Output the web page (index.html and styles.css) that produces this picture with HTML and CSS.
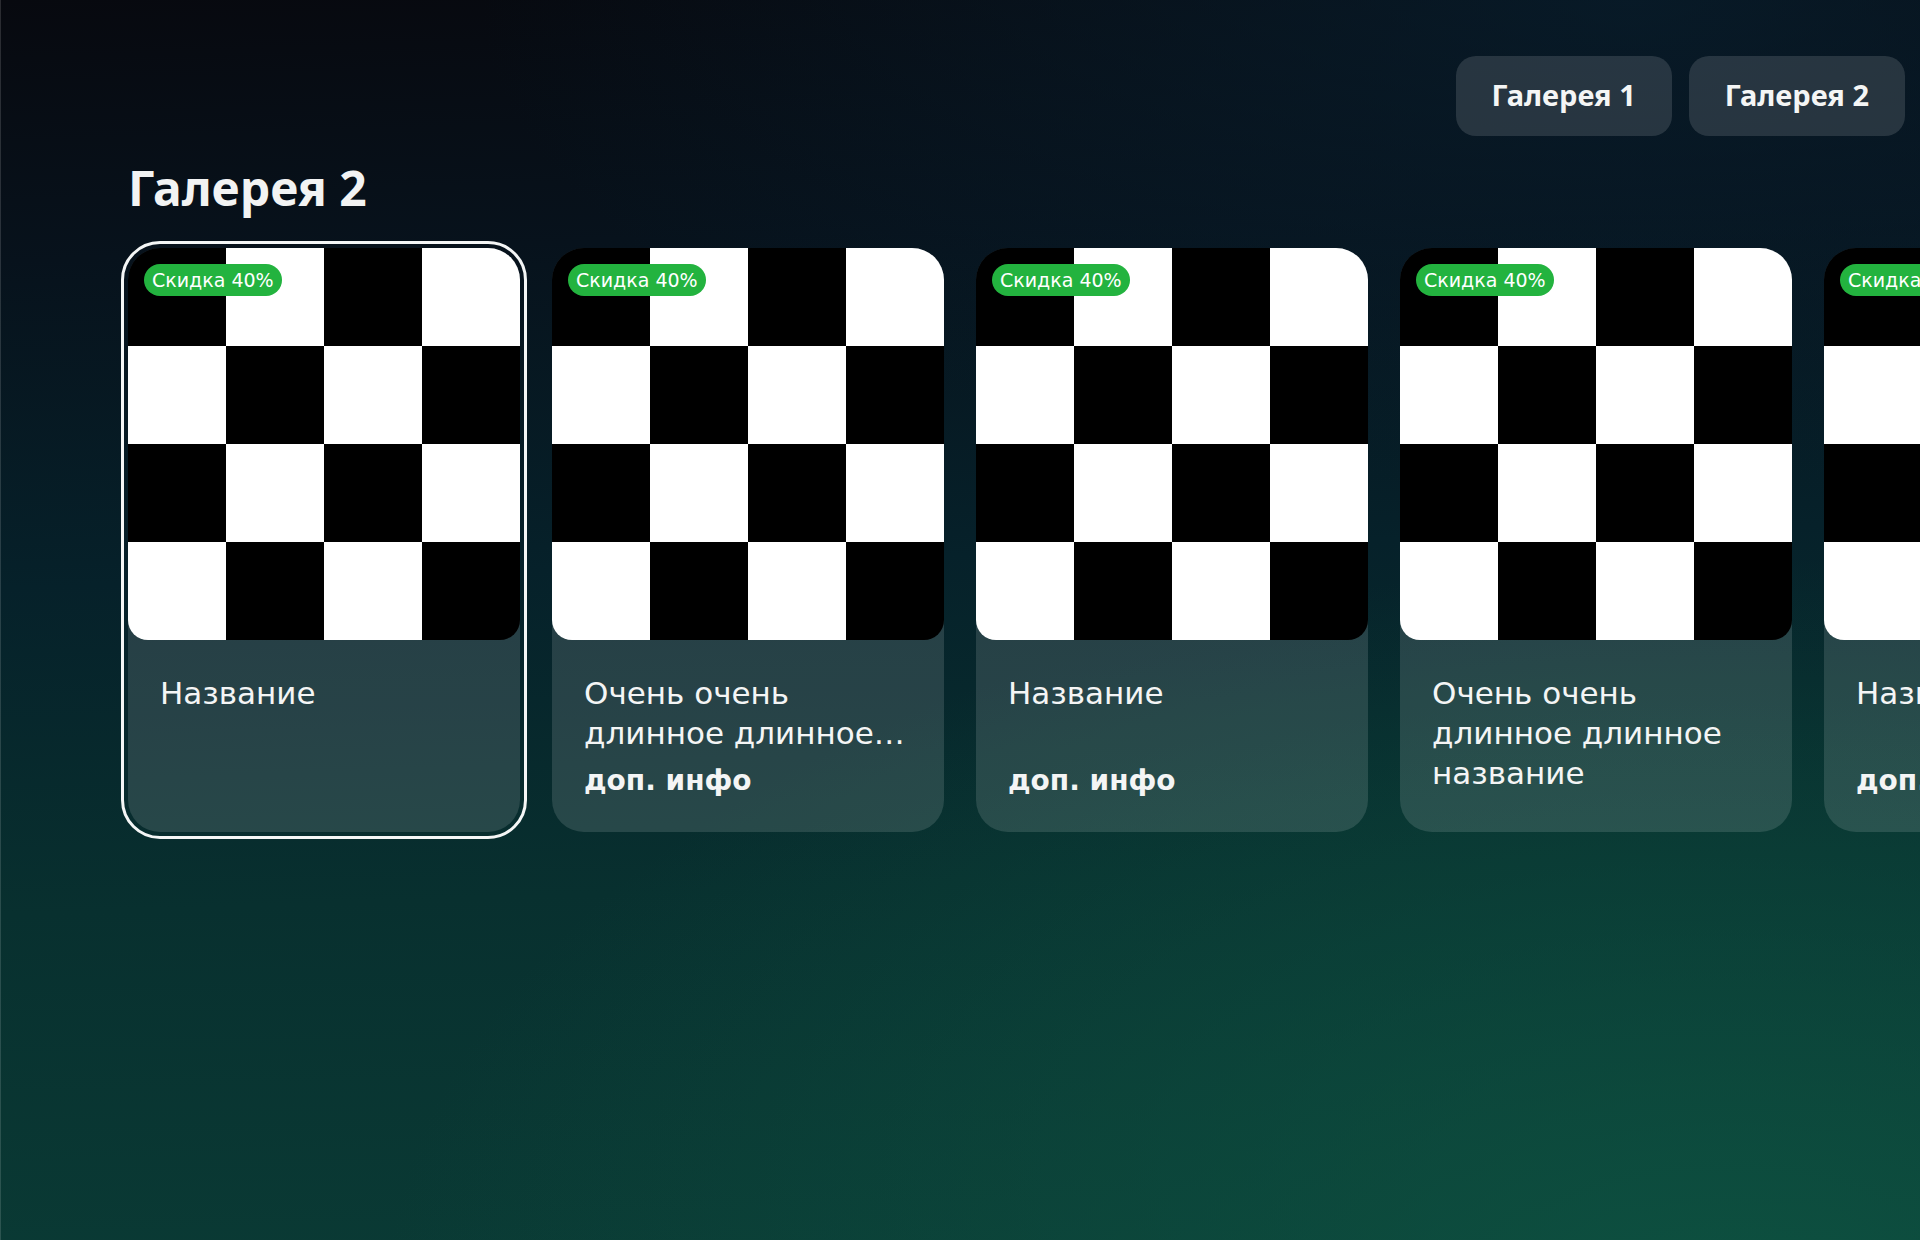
FILE: index.html
```html
<!DOCTYPE html>
<html lang="ru">
<head>
<meta charset="utf-8">
<title>Галерея</title>
<link rel="stylesheet" href="styles.css">
</head>
<body>
<div class="page">
  <nav class="tabs">
    <button class="tab">Галерея 1</button>
    <button class="tab">Галерея 2</button>
  </nav>
  <h1 class="heading">Галерея 2</h1>
  <div class="row">
    <div class="card focused">
      <div class="thumb"><span class="badge">Скидка 40%</span></div>
      <div class="info">
        <div class="title">Название</div>
      </div>
    </div>
    <div class="card">
      <div class="thumb"><span class="badge">Скидка 40%</span></div>
      <div class="info">
        <div class="title clamp">Очень очень длинное длинное название</div>
        <div class="extra">доп. инфо</div>
      </div>
    </div>
    <div class="card">
      <div class="thumb"><span class="badge">Скидка 40%</span></div>
      <div class="info">
        <div class="title clamp">Название</div>
        <div class="extra">доп. инфо</div>
      </div>
    </div>
    <div class="card">
      <div class="thumb"><span class="badge">Скидка 40%</span></div>
      <div class="info">
        <div class="title">Очень очень длинное длинное название</div>
      </div>
    </div>
    <div class="card">
      <div class="thumb"><span class="badge">Скидка 40%</span></div>
      <div class="info">
        <div class="title clamp">Название</div>
        <div class="extra">доп. инфо</div>
      </div>
    </div>
  </div>
</div>
</body>
</html>
```
FILE: styles.css
```css
html, body {
  margin: 0;
  padding: 0;
  width: 1920px;
  height: 1240px;
  overflow: hidden;
}
body {
  font-family: "Noto Sans", "Open Sans", sans-serif;
  color: #f4f5f5;
  background:
    radial-gradient(ellipse 70% 60% at 90% 105%, rgba(14, 84, 66, 0.85), rgba(14, 84, 66, 0) 100%),
    radial-gradient(ellipse 60% 40% at 85% 0%, rgba(8, 32, 48, 0.7), rgba(8, 32, 48, 0) 100%),
    linear-gradient(178deg, #07090f 0%, #07121c 20%, #06212a 45%, #08302f 70%, #0a3b35 100%);
  box-shadow: inset 1px 0 0 rgba(255, 255, 255, 0.14);
}
.page {
  padding: 56px 15px 0 128px;
}
.tabs {
  display: flex;
  justify-content: flex-end;
  gap: 17px;
}
.tab {
  height: 80px;
  padding: 0 36px 4px;
  border: 0;
  border-radius: 20px;
  background: rgba(255, 255, 255, 0.13);
  color: #f4f5f5;
  font-family: "Noto Sans", "Open Sans", sans-serif;
  font-size: 29px;
  font-weight: 700;
}
.heading {
  margin: 24px 0 32px;
  font-size: 48px;
  line-height: 56px;
  font-weight: 700;
  color: #f2f3f3;
}
.row {
  display: flex;
  gap: 32px;
}
.card {
  flex: 0 0 392px;
  height: 584px;
  border-radius: 32px;
  background: rgba(255, 255, 255, 0.13);
  display: flex;
  flex-direction: column;
}
.card.focused {
  outline: 3px solid #f4f6f6;
  outline-offset: 4px;
}
.thumb {
  position: relative;
  height: 392px;
  border-radius: 32px 32px 20px 20px;
  background: repeating-conic-gradient(#fff 0 25%, #000 0 50%) 0 0 / 196px 196px;
}
.badge {
  position: absolute;
  left: 16px;
  top: 16px;
  height: 32px;
  padding: 0 8px;
  border-radius: 16px;
  background: #23b33f;
  color: #fff;
  font-family: "DejaVu Sans", sans-serif;
  font-size: 19px;
  line-height: 32px;
}
.info {
  padding: 33px 32px 0;
}
.title {
  font-family: "DejaVu Sans", sans-serif;
  font-size: 31px;
  line-height: 40px;
  min-height: 80px;
}
.title.clamp {
  display: -webkit-box;
  -webkit-line-clamp: 2;
  -webkit-box-orient: vertical;
  overflow: hidden;
}
.extra {
  margin-top: 8px;
  font-family: "DejaVu Sans", sans-serif;
  font-size: 28px;
  line-height: 40px;
  font-weight: 700;
}
```
